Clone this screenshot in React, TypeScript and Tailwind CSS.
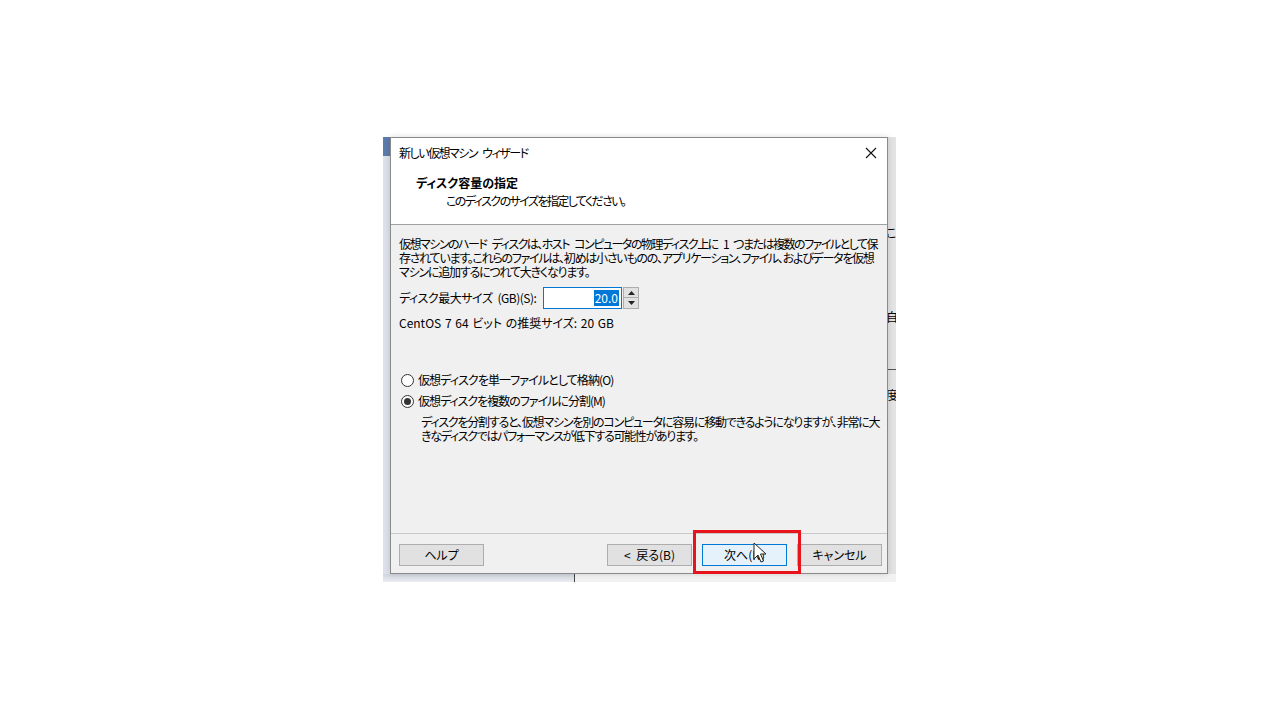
import React from "react";

const F = "font-['Meiryo_UI','Noto_Sans_CJK_JP',sans-serif] [font-feature-settings:'palt']";

function Btn({ children, primary }: { children: React.ReactNode; primary?: boolean }) {
  return (
    <div
      className={
        "w-[85px] h-[22px] flex items-center justify-center text-[12px] text-black border [word-spacing:3px] " +
        (primary ? "border-[#0078d7] bg-[#e5f1fb]" : "border-[#adadad] bg-[#e1e1e1]")
      }
    >
      {children}
    </div>
  );
}

function Radio({ checked, label, track }: { checked?: boolean; label: string; track: string }) {
  return (
    <div className="flex items-center gap-[4px] h-[14px]">
      <div className="w-[13px] h-[13px] rounded-full border border-[#333] bg-white flex items-center justify-center">
        {checked && <div className="w-[7px] h-[7px] rounded-full bg-[#333]" />}
      </div>
      <span className={track}>{label}</span>
    </div>
  );
}

export default function App() {
  return (
    <div className={"w-[1280px] h-[720px] bg-white overflow-hidden " + F}>
      <div className="pl-[383px] pt-[137px]">
        {/* background window */}
        <div className="relative w-[513px] h-[445px] bg-[#ececec]">
          <div className="absolute left-0 top-0 w-[7px] h-[19px] bg-[#5b7bab]" />
          <div className="absolute left-0 top-[19px] w-[7px] h-[418px] bg-[#dde2ea]" />
          <div className="absolute left-0 top-[437px] w-[191px] h-[8px] bg-gradient-to-b from-[#d0d6df] to-[#e9ecf0]" />
          <div className="absolute left-[191px] top-[437px] w-[1px] h-[8px] bg-[#444]" />
          <div className="absolute left-[192px] top-[437px] w-[321px] h-[8px] bg-[#f2f2f2]" />
          <div className="absolute left-[505px] top-0 w-[8px] h-[437px] bg-[#e3e3e3] overflow-hidden text-[12px] text-black">
            <div className="absolute left-[-2px] top-[89px] leading-[14px]">こ</div>
            <div className="absolute left-[-2px] top-[173px] leading-[14px]">自</div>
            <div className="absolute left-0 top-[232px] w-[8px] h-[1px] bg-[#555]" />
            <div className="absolute left-[-2px] top-[251px] leading-[14px]">度</div>
          </div>

          {/* dialog */}
          <div className="absolute left-[7px] top-0 w-[498px] h-[437px] border border-[#8a8a8a] bg-[#f0f0f0] flex flex-col shadow-[0_0_6px_rgba(0,0,0,0.15)] text-[12px] text-black leading-[14px]">
            <div className="bg-white h-[86px] flex flex-col">
              <div className="h-[30px] flex items-center justify-between pl-[8px] pr-[10px]">
                <span className="tracking-[-1.5px] [word-spacing:4px]">新しい仮想マシン ウィザード</span>
                <svg width="12" height="12" viewBox="0 0 12 12">
                  <path d="M1 1 L11 11 M11 1 L1 11" stroke="#111" strokeWidth="1.1" fill="none" />
                </svg>
              </div>
              <div className="pl-[25px] pt-[8px] font-bold">ディスク容量の指定</div>
              <div className="pl-[55px] pt-[4px] tracking-[-1.6px]">このディスクのサイズを指定してください。</div>
            </div>
            <div className="h-[1px] bg-[#a0a0a0]" />
            <div className="flex-1 pl-[8px] pt-[12px] flex flex-col">
              <div className="whitespace-nowrap tracking-[-1.5px] [word-spacing:4px]">仮想マシンのハード ディスクは、ホスト コンピュータの物理ディスク上に 1 つまたは複数のファイルとして保</div>
              <div className="whitespace-nowrap tracking-[-1.25px]">存されています。これらのファイルは、初めは小さいものの、アプリケーション、ファイル、およびデータを仮想</div>
              <div className="whitespace-nowrap tracking-[-1.2px]">マシンに追加するにつれて大きくなります。</div>
              <div className="flex items-center mt-[8px] h-[22px]">
                <span className="w-[144px] tracking-[-0.5px] [word-spacing:3px]">ディスク最大サイズ (GB)(S):</span>
                <div className="w-[79px] h-[22px] border border-[#0078d7] bg-white flex items-center justify-end pr-[2px]">
                  <span className="bg-[#0078d7] text-white px-[1px] leading-[16px]">20.0</span>
                </div>
                <div className="ml-[1px] w-[16px] h-[22px] flex flex-col">
                  <div className="h-[11px] border border-[#adadad] bg-[#e1e1e1] flex items-center justify-center">
                    <svg width="7" height="4" viewBox="0 0 7 4"><path d="M0 4 L3.5 0 L7 4Z" fill="#222" /></svg>
                  </div>
                  <div className="h-[11px] border border-t-0 border-[#adadad] bg-[#e1e1e1] flex items-center justify-center">
                    <svg width="7" height="4" viewBox="0 0 7 4"><path d="M0 0 L3.5 4 L7 0Z" fill="#222" /></svg>
                  </div>
                </div>
              </div>
              <div className="mt-[7px] [word-spacing:1px]">CentOS 7 64 ビット の推奨サイズ: 20 GB</div>
              <div className="mt-[43px] pl-[2px] flex flex-col gap-[7px]">
                <Radio track="tracking-[-0.9px]" label="仮想ディスクを単一ファイルとして格納(O)" />
                <Radio track="tracking-[-1px]" checked label="仮想ディスクを複数のファイルに分割(M)" />
              </div>
              <div className="pl-[22px] mt-[7px]">
                <div className="whitespace-nowrap tracking-[-1.2px]">ディスクを分割すると、仮想マシンを別のコンピュータに容易に移動できるようになりますが、非常に大</div>
                <div className="whitespace-nowrap tracking-[-1.3px]">きなディスクではパフォーマンスが低下する可能性があります。</div>
              </div>
            </div>
            <div className="h-[1px] bg-[#c8c8c8] mx-[0px]" />
            <div className="h-[39px] flex items-start pt-[10px] pl-[8px]">
              <Btn>ヘルプ</Btn>
              <div className="ml-[123px]"><Btn>&lt; 戻る(B)</Btn></div>
              <div className="ml-[10px]"><Btn primary>次へ(N)</Btn></div>
              <div className="ml-[10px]"><Btn>キャンセル</Btn></div>
            </div>
          </div>

          {/* highlight box */}
          <div className="absolute left-[310px] top-[393px] w-[108px] h-[44px] border-[3px] border-[#e8141b]" />
          {/* cursor */}
          <svg className="absolute left-[370px] top-[405px]" width="14" height="22" viewBox="0 0 14 22">
            <path d="M1 1 L1 17 L5 13 L8 20 L10.5 19 L7.5 12 L13 12 Z" fill="white" stroke="#222" strokeWidth="1" strokeLinejoin="round" />
          </svg>
        </div>
      </div>
    </div>
  );
}
